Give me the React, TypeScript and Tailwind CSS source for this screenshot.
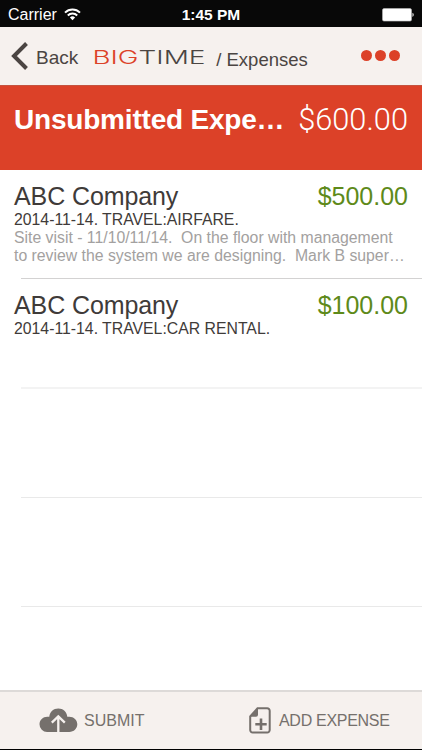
type Expense = {
  company: string;
  amount: string;
  detail: string;
  divider: string;
  notes?: string[];
};

const expenses: Expense[] = [
  {
    company: "ABC Company",
    amount: "$500.00",
    detail: "2014-11-14. TRAVEL:AIRFARE.",
    divider: "h-px bg-[#d3d2d2]",
    notes: [
      "Site visit - 11/10/11/14.  On the floor with management",
      "to review the system we are designing.  Mark B super…",
    ],
  },
  {
    company: "ABC Company",
    amount: "$100.00",
    detail: "2014-11-14. TRAVEL:CAR RENTAL.",
    divider: "h-[2px] bg-[#f3f3f3]",
  },
];

function WifiIcon() {
  return (
    <svg width="17" height="13" viewBox="0 0 17 13" fill="none" stroke="#fff" strokeWidth="2">
      <path d="M1 4.6a10.6 10.6 0 0 1 15 0" />
      <path d="M3.8 7.5a6.6 6.6 0 0 1 9.4 0" />
      <path d="M8.5 12.2 5.9 9.5a3.7 3.7 0 0 1 5.2 0z" fill="#fff" stroke="none" />
    </svg>
  );
}

function BatteryIcon() {
  return (
    <svg width="33" height="14" viewBox="0 0 33 14">
      <rect x="0.5" y="0.5" width="29" height="12.6" rx="1.5" fill="#fff" stroke="#bbb" strokeWidth="0.6" />
      <path d="M30.5 4.7c1.6.6 1.6 3.6 0 4.2z" fill="#fff" />
    </svg>
  );
}

function Logo() {
  return (
    <svg
      className="ml-[12px] mt-[2px]"
      width="118"
      height="24"
      viewBox="0 0 118 24"
      fontFamily="Inter, sans-serif"
      fontSize="18"
      fontWeight="300"
    >
      <text x="2.5" y="19" fill="#dc4128" textLength="46" lengthAdjust="spacingAndGlyphs">
        BIG
      </text>
      <text x="48.5" y="19" fill="#4b4542" textLength="67" lengthAdjust="spacingAndGlyphs">
        TIME
      </text>
    </svg>
  );
}

function CloudIcon() {
  return (
    <svg width="39" height="25" viewBox="0 0 39 25">
      <path
        d="M8.3 24A7.6 7.6 0 0 1 .5 16.3C.5 12 4 8.7 8.3 8.7h2C10.7 4 14.4.5 19.3.5s8.6 3.5 9 8.2h2c4.5 0 8 3.3 8 7.6S34.8 24 30.3 24z"
        fill="#75706c"
      />
      <path d="M19.3 24.5V9M12.800 14.600l6.500-6.200 6.500 6.200" fill="none" stroke="#f6f1ee" strokeWidth="2.3" />
    </svg>
  );
}

function AddFileIcon() {
  return (
    <svg width="22" height="27" viewBox="0 0 22 27" fill="none" stroke="#75706c">
      <path
        d="M8.5 1.2h9.700a2.500 2.500 0 0 1 2.500 2.500v19.400a2.500 2.500 0 0 1-2.500 2.500H3.700a2.500 2.500 0 0 1-2.500-2.500V9.400z"
        strokeWidth="2"
      />
      <path d="M9 1 1 9.800h6a2 2 0 0 0 2-2z" fill="#75706c" stroke="none" />
      <path d="M12 11.500v11.500M6.300 17.300h11.400" strokeWidth="2.6" />
    </svg>
  );
}

function ExpenseRow({ expense }: { expense: Expense }) {
  return (
    <li className="h-[109px]">
      <div className="h-[108px] px-[14px] pt-[13px]">
        <div className="flex h-[27px] items-center justify-between text-[25px] leading-[27px]">
          <h2 className="tracking-[-0.1px] text-[#3f3b39]">{expense.company}</h2>
          <span className="text-[#5e8a1a]">{expense.amount}</span>
        </div>
        <p className="h-[19px] whitespace-pre text-[15.8px] leading-[19px] text-[#3f3b39]">{expense.detail}</p>
        {expense.notes?.map((line) => (
          <p key={line} className="whitespace-pre text-[15.8px] leading-[18px] text-[#a3a1a0]">
            {line}
          </p>
        ))}
      </div>
      <div className={`ml-[21px] ${expense.divider}`} />
    </li>
  );
}

export default function App() {
  return (
    <div className="flex h-[750px] w-[422px] flex-col overflow-hidden bg-white font-['Liberation_Sans',Arial,sans-serif]">
      <div className="grid h-[27px] grid-cols-3 items-center bg-[#080808] text-[16px] text-white">
        <div className="flex items-center gap-[7px] pl-[8px] pt-[2px]">
          <span>Carrier</span>
          <WifiIcon />
        </div>
        <span className="pt-[3px] text-center text-[15.5px] font-bold">1:45 PM</span>
        <div className="flex justify-end pr-[7px] pt-[2px]">
          <BatteryIcon />
        </div>
      </div>

      <header className="flex h-[58px] items-center bg-[#f6f1ee] pl-[11px] text-[#4b4542]">
        <svg width="17" height="28" viewBox="0 0 17 28" fill="none" stroke="#4b4542" strokeWidth="4">
          <path d="M15.5 1.5 3 14l12.500 12.500" />
        </svg>
        <span className="ml-[8px] mt-[4px] text-[19px]">Back</span>
        <Logo />
        <span className="ml-[8px] mt-[7px] text-[18.5px]">/ Expenses</span>
        <div className="mb-[2px] ml-auto mr-[22px] flex gap-[3px]">
          <i className="size-[11px] rounded-full bg-[#dc4128]" />
          <i className="size-[11px] rounded-full bg-[#dc4128]" />
          <i className="size-[11px] rounded-full bg-[#dc4128]" />
        </div>
      </header>

      <section className="flex h-[85px] items-start justify-between border-t border-[#c5533f] bg-[#dc4128] px-[14px] pt-[16px] text-white">
        <h1 className="whitespace-nowrap text-[28px] font-bold leading-[36px] tracking-[-0.2px]">Unsubmitted Expe…</h1>
        <span className="font-['Roboto',sans-serif] text-[30.8px] font-light leading-[36px]">$600.00</span>
      </section>

      <ul className="flex-1">
        {expenses.map((expense) => (
          <ExpenseRow key={expense.amount} expense={expense} />
        ))}
        <li className="ml-[21px] h-[110px] border-b border-[#e9e9e9]" />
        <li className="ml-[21px] h-[109px] border-b border-[#e9e9e9]" />
      </ul>

      <footer className="flex h-[60px] items-center border-b border-t-2 border-b-black border-t-[#dddad8] bg-[#f6f1ee] text-[16px] text-[#75706c]">
        <button className="ml-[39px] flex w-[107px] items-center gap-[6px]">
          <CloudIcon />
          SUBMIT
        </button>
        <button className="ml-[103px] flex items-center gap-[8px] whitespace-nowrap tracking-[-0.3px]">
          <AddFileIcon />
          ADD EXPENSE
        </button>
      </footer>
    </div>
  );
}
